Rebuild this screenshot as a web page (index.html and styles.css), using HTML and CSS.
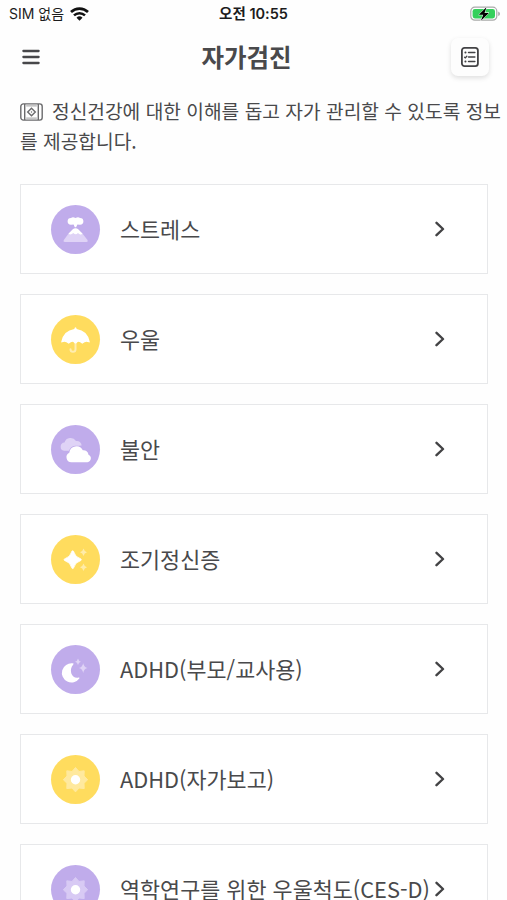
FILE: index.html
```html
<!DOCTYPE html>
<html lang="ko">
<head>
    <meta charset="UTF-8">
    <meta name="viewport" content="width=device-width, initial-scale=1.0">
    <title>자가검진</title>
    <link rel="stylesheet" href="styles.css">
</head>
<body>
    <div class="status-bar">
        <div class="carrier">
            <span>SIM 없음</span>
            <svg class="wifi" width="19" height="14" viewBox="0 0 19 14" fill="none" stroke="#111">
                <path d="M1 5.1a12.3 12.3 0 0 1 17 0" stroke-width="2.7"/>
                <path d="M4 8.4a8 8 0 0 1 11 0" stroke-width="2.5"/>
                <path d="M9.5 13.8l-3-3a4.3 4.3 0 0 1 6 0z" fill="#111" stroke="none"/>
            </svg>
        </div>
        <div class="clock">오전 10:55</div>
        <svg class="battery" width="31" height="18" viewBox="0 0 31 18">
            <rect x=".8" y="2.2" width="26" height="13" rx="4" fill="#fff" stroke="#a9aaa9" stroke-width="1.2"/>
            <rect x="2.6" y="4" width="22.4" height="9.4" rx="2.3" fill="#35d05b"/>
            <path d="M28.2 6.5v4.6q1.8-.7 1.8-2.3t-1.8-2.3z" fill="#a9aaa9"/>
            <path d="M16.6 2.1L8.8 9.8h4.4l-2.3 6 8-7.9h-4.4z" fill="#000" stroke="#fff" stroke-width="1" paint-order="stroke"/>
        </svg>
    </div>

    <header class="header">
        <button class="menu-button" aria-label="메뉴">
            <svg width="18" height="16" viewBox="0 0 18 16" stroke="#47474a" stroke-width="2.3" stroke-linecap="round">
                <path d="M1.4 2h15.2M1.4 8h15.2M1.4 14h15.2"/>
            </svg>
        </button>
        <h1>자가검진</h1>
        <button class="list-button" aria-label="검진 기록">
            <svg width="20" height="22" viewBox="0 0 20 22" fill="none" stroke="#434345" stroke-linecap="round">
                <rect x="1.9" y="1.9" width="16" height="18.2" rx="2.6" stroke-width="1.8"/>
                <path d="M8.6 6.5h6.2M8.6 11h6.2M8.6 15.5h6.2" stroke-width="1.6"/>
                <path d="M5.4 6.5h.1M5.4 15.5h.1" stroke-width="2"/>
                <path d="M4.6 11.2l.7.7 1.5-1.6" stroke-width="1.3"/>
            </svg>
        </button>
    </header>

    <p class="description">
        <svg class="info-icon" width="23" height="18" viewBox="0 0 23 18" fill="none" stroke="#6b6b6d" stroke-width="1.4">
            <rect x=".8" y=".9" width="21.4" height="16.2" rx="2.6"/>
            <path d="M4.7 1v16M18.3 1v16"/>
            <path d="M6.2 2.9h10.6M6.2 15.1h10.6" stroke="#a0a0a2" stroke-width="1"/>
            <path d="M11.5 5.2L15.3 9l-3.8 3.8L7.7 9z"/>
            <circle cx="11.5" cy="9" r=".7" fill="#6b6b6d" stroke="none"/>
        </svg>정신건강에 대한 이해를 돕고 자가 관리할 수 있도록 정보를 제공합니다.
    </p>

    <main class="test-list">
        <a class="test-card">
            <svg class="test-icon purple" viewBox="0 0 49 49">
                <path d="M13 34.8l5-6.8q6.6-6 13 0l5.3 6.8q1.2 2.2-1 2.2H14q-2.3 0-1-2.2z" fill="#dfd3f6"/>
                <path d="M17.5 28.8l4-4.4q3-2.4 6 0l4 4.4q-1.4 1.4-3.2.2l-1.4-1q-2 2.4-4.6 0-2.4 2.4-4.8.8z" fill="#fff"/>
                <path d="M20 19.7a3.4 3.4 0 0 1 0-6.8q1.8-1.3 4.5 0 2.7-1.3 4.5 0a3.4 3.4 0 0 1 0 6.8l-2.6-.2-1.3 2.8h-1.3l-1.2-2.8z" fill="#fff"/>
            </svg>
            <span class="test-name">스트레스</span>
            <svg class="chevron" viewBox="0 0 10 16"><path d="M1.5 1.8L8 8l-6.5 6.2"/></svg>
        </a>
        <a class="test-card">
            <svg class="test-icon yellow" viewBox="0 0 49 49">
                <path d="M24.5 27v7.2a2.5 2.5 0 0 1-5 0" fill="none" stroke="#ffedb0" stroke-width="2" stroke-linecap="round"/>
                <path d="M24.5 12.3q.9 0 1.2 1.6Q36.5 15.5 38.7 26.5q.2 1.5-.8.8-3.4-1.7-5.9 1-.7.7-1.4 0-2.8-3-5-.4-1.1 1-2.2 0-2.2-2.6-5 .4-.7.7-1.4 0-2.5-2.7-5.9-1-1 .7-.8-.8Q12.5 15.5 23.3 13.9q.3-1.6 1.2-1.6z" fill="#fff"/>
            </svg>
            <span class="test-name">우울</span>
            <svg class="chevron" viewBox="0 0 10 16"><path d="M1.5 1.8L8 8l-6.5 6.2"/></svg>
        </a>
        <a class="test-card">
            <svg class="test-icon purple" viewBox="0 0 49 49">
                <path d="M13 25.8a4.2 4.2 0 0 1 .5-8.3 6.4 6.4 0 0 1 11.5-1.5 4.6 4.6 0 0 1 5.600 4.600l-5 .4-7 4.800z" fill="#dfd3f6"/>
                <path d="M20.300 37.300a5 5 0 0 1-2-9.500 7.200 7.200 0 0 1 13.500-2.600 5 5 0 0 1 5.700 4.500 4 4 0 0 1-1 7.600z" fill="#fff" stroke="#c0aceb" stroke-width="1.4" paint-order="stroke"/>
            </svg>
            <span class="test-name">불안</span>
            <svg class="chevron" viewBox="0 0 10 16"><path d="M1.5 1.8L8 8l-6.5 6.2"/></svg>
        </a>
        <a class="test-card">
            <svg class="test-icon yellow" viewBox="0 0 49 49">
                <path d="M21.7 15.8q.9 0 1.2 1.300 1.300 5 6.200 6.400 1.200.3 1.200 1.200t-1.200 1.200q-4.900 1.400-6.200 6.400-.3 1.300-1.200 1.300t-1.200-1.300q-1.300-5-6.200-6.400-1.200-.3-1.200-1.200t1.200-1.200q4.900-1.400 6.200-6.400.3-1.300 1.200-1.300z" fill="#fff" stroke="#fff" stroke-width=".8"/>
                <path d="M32.5 13.500q.8 3 3.500 3.700-2.700.7-3.500 3.700-.8-3-3.500-3.700 2.700-.7 3.500-3.700zM32.500 28.500q.8 3 3.500 3.700-2.700.7-3.500 3.700-.8-3-3.500-3.700 2.700-.7 3.500-3.700z" fill="#ffecaa"/>
            </svg>
            <span class="test-name">조기정신증</span>
            <svg class="chevron" viewBox="0 0 10 16"><path d="M1.5 1.8L8 8l-6.5 6.2"/></svg>
        </a>
        <a class="test-card">
            <svg class="test-icon purple" viewBox="0 0 49 49">
                <path d="M21.5 18.3a9.6 9.6 0 1 0 6.8 15.1q.6-1.1-.8-.8c-6.600 1.500-10.300-7.400-5.200-13.200q1-1-.8-1.100z" fill="#fff"/>
                <path d="M27 13.400q.6 2.700 3 3.300-2.400.6-3 3.300-.6-2.700-3-3.300 2.400-.6 3-3.300zM32.200 18.300q.9 4 4.300 4.800-3.400.8-4.300 4.800-.9-4-4.300-4.800 3.400-.8 4.300-4.800z" fill="#dfd3f6"/>
            </svg>
            <span class="test-name">ADHD(부모/교사용)</span>
            <svg class="chevron" viewBox="0 0 10 16"><path d="M1.5 1.8L8 8l-6.5 6.2"/></svg>
        </a>
        <a class="test-card">
            <svg class="test-icon yellow" viewBox="0 0 49 49">
                <path d="M21 16.5l3.5-4 3.5 4 5.2-.7-.2 5.2 3.7 3.7-3.7 3.6.2 5.3-5.2-.6-3.5 3.9-3.5-3.9-5.2.6.2-5.3-3.7-3.6 3.700-3.700-.2-5.200z" fill="#ffe99e" stroke="#ffe99e" stroke-linejoin="round"/>
                <circle cx="24.5" cy="24.7" r="4.7" fill="#fff"/>
            </svg>
            <span class="test-name">ADHD(자가보고)</span>
            <svg class="chevron" viewBox="0 0 10 16"><path d="M1.5 1.8L8 8l-6.5 6.2"/></svg>
        </a>
        <a class="test-card">
            <svg class="test-icon purple" viewBox="0 0 49 49">
                <path d="M21 16.5l3.5-4 3.5 4 5.2-.7-.2 5.2 3.7 3.7-3.7 3.6.2 5.3-5.2-.6-3.5 3.9-3.5-3.9-5.2.6.2-5.3-3.7-3.6 3.700-3.700-.2-5.200z" fill="#d8caf4" stroke="#d8caf4" stroke-linejoin="round"/>
                <circle cx="24.5" cy="24.7" r="4.7" fill="#fff"/>
            </svg>
            <span class="test-name">역학연구를 위한 우울척도(CES-D)</span>
            <svg class="chevron" viewBox="0 0 10 16"><path d="M1.5 1.8L8 8l-6.5 6.2"/></svg>
        </a>
    </main>
</body>
</html>
```

FILE: styles.css
```css
* {
    box-sizing: border-box;
}

body {
    margin: 0;
    height: 900px;
    overflow: hidden;
    background-color: #fefefe;
    color: #49494b;
    font-family: "Noto Sans CJK KR", sans-serif;
}

button {
    display: flex;
    align-items: center;
    justify-content: center;
    padding: 0;
    border: none;
    background: none;
}

/* Status bar */
.status-bar {
    display: grid;
    grid-template-columns: 1fr auto 1fr;
    align-items: center;
    height: 28px;
    padding: 0 6px 0 9px;
    color: #1c1c1d;
    font-family: Inter, "Noto Sans CJK KR", sans-serif;
    font-size: 14px;
    line-height: 28px;
}

.carrier {
    display: flex;
    align-items: center;
    gap: 6px;
}

.clock {
    padding-right: 3px;
    font-size: 14.5px;
    font-weight: 600;
}

.battery {
    justify-self: end;
}

/* Header */
.header {
    display: flex;
    align-items: center;
    justify-content: space-between;
    height: 58px;
    padding: 0 18px 0 21px;
}

.menu-button {
    width: 20px;
    height: 38px;
}

.header h1 {
    margin: 0;
    padding-left: 1px;
    font-size: 24.5px;
    font-weight: 700;
    line-height: 36px;
}

.list-button {
    width: 38px;
    height: 38px;
    border-radius: 7px;
    background-color: #fdfdfd;
    box-shadow: 0 2px 5px rgba(0, 0, 0, 0.13);
}

/* Description */
.description {
    margin: 11px 0 28px;
    padding: 0 0 0 20px;
    font-size: 19.2px;
    line-height: 29.5px;
    word-break: break-all;
}

.info-icon {
    margin-right: 9px;
    vertical-align: -2px;
}

/* Test list */
.test-list {
    display: flex;
    flex-direction: column;
    gap: 20px;
    padding: 0 19px 0 20px;
}

.test-card {
    display: flex;
    flex-shrink: 0;
    align-items: center;
    height: 90px;
    padding: 0 42.5px 0 30px;
    border: 1px solid #e7e8ea;
    background-color: #fff;
}

.test-icon {
    flex-shrink: 0;
    width: 49px;
    height: 49px;
    margin-right: 20px;
    border-radius: 50%;
}

.purple {
    background-color: #c0aceb;
}

.yellow {
    background-color: #ffdc5e;
}

.test-name {
    flex: 1;
    font-size: 21.8px;
    line-height: 32px;
    white-space: nowrap;
}

.chevron {
    flex-shrink: 0;
    width: 10px;
    height: 16px;
    fill: none;
    stroke: #434345;
    stroke-width: 2.4;
    stroke-linecap: round;
    stroke-linejoin: round;
}
```
